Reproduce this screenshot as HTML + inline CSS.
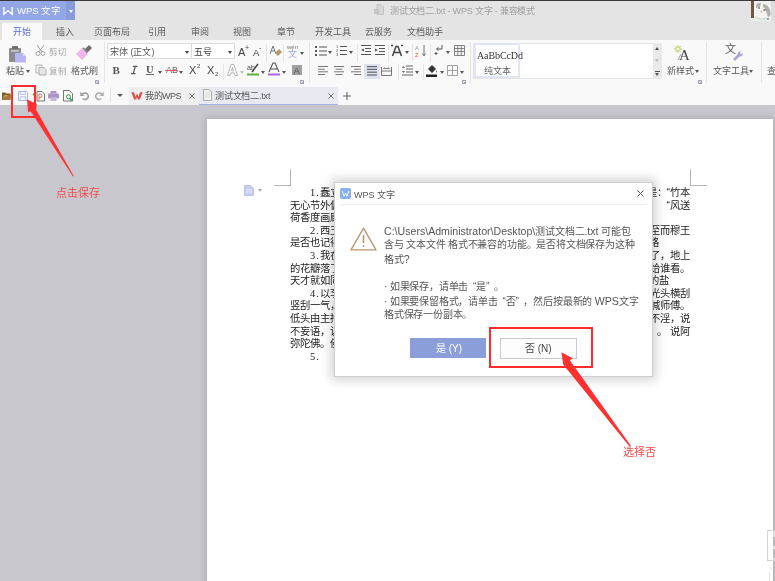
<!DOCTYPE html>
<html lang="zh-CN"><head><meta charset="utf-8">
<style>
*{margin:0;padding:0;box-sizing:border-box}
html,body{width:775px;height:581px;overflow:hidden;background:#c8c7cd}
body{position:relative;font-family:"Liberation Sans",sans-serif;color:#333}
#wrap{position:absolute;left:0;top:0;width:775px;height:581px;will-change:transform}
.a{position:absolute}
.t{position:absolute;white-space:nowrap;line-height:1}
svg{position:absolute;overflow:visible}
#topline{left:0;top:0;width:775px;height:1px;background:#3a3a3a}
#titlebar{left:0;top:1px;width:775px;height:39px;background:#e4e4e4}
#ribbon{left:0;top:40px;width:775px;height:46px;background:#f9f9f9}
#qat{left:0;top:86px;width:775px;height:19px;background:#f9f9f9}
#page{left:207px;top:119px;width:566px;height:470px;background:#fff;box-shadow:0 0 6px 1px rgba(60,55,70,0.22)}
.sep{position:absolute;width:1px;background:#e5e5e5}
.tab{position:absolute;top:27px;font-size:9px;color:#5a5a5a;line-height:10px}
.lbl{position:absolute;font-size:10px;color:#5a5a5a;line-height:10px;white-space:nowrap}
.dd{position:absolute;width:0;height:0;border-left:2.5px solid transparent;border-right:2.5px solid transparent;border-top:3px solid #555}
.ln{position:absolute;width:1px;background:#ccc}
.doc{position:absolute;font-size:10.3px;line-height:11px;color:#222;white-space:nowrap}
.num{font-family:"Liberation Serif",serif;font-size:10.5px;letter-spacing:1px}
.q{display:inline-block;width:10.3px;text-align:right}
.q2{display:inline-block;width:10.3px;text-align:left}
.dtx{font-size:10px;letter-spacing:-0.19px;line-height:14px;color:#555}
.dtx .L{font-size:10.6px;letter-spacing:0}
.dtx .q,.dtx .q2{width:8px}
</style></head><body><div id="wrap">
<div id="topline" class="a"></div>
<div id="titlebar" class="a"></div>
<div id="ribbon" class="a"></div>
<div id="qat" class="a"></div>

<!-- WPS button -->
<div class="a" style="left:0;top:1px;width:66px;height:19px;background:#93a6e6"></div>
<div class="a" style="left:66px;top:1px;width:9px;height:19px;background:#8a9bd9"></div>
<svg style="left:3px;top:7px" width="10" height="8" viewBox="0 0 10 8"><path d="M0.8 0 V7.2 L5 3.6 L9.2 7.2 V0" fill="none" stroke="#fff" stroke-width="1.4"/></svg>
<div class="t" style="left:17px;top:6px;font-size:9.5px;color:#fff">WPS 文字</div>
<div class="dd" style="left:68.5px;top:9.5px;border-top-color:#fff"></div>

<!-- title -->
<svg style="left:374px;top:4px" width="10" height="11" viewBox="0 0 10 11"><path d="M3 0.5h4l2.5 2.5v7.5h-6.5z" fill="#d6d6d6" stroke="#bbb" stroke-width="0.8"/><rect x="0" y="5" width="5" height="5" fill="#c4c4c4"/></svg>
<div class="t" style="left:390px;top:7px;font-size:9px;letter-spacing:-0.2px;color:#a0a0a0">测试文档二.txt - WPS 文字 - 兼容模式</div>

<!-- avatar -->
<svg style="left:751px;top:1px" width="24" height="21" viewBox="0 0 24 21">
<rect x="0" y="0" width="20" height="20" fill="#f0f1ee"/>
<rect x="0" y="0" width="3" height="17" fill="#6b5a44"/>
<ellipse cx="11" cy="11" rx="8" ry="8.5" fill="#f4f5f2"/>
<path d="M5 4q2-3 5-2l-1 4q-2 0-4 1z" fill="#b5b6b2"/>
<path d="M12 3q5 0 7 6t-2 7l-2-6q-1-3-3-4z" fill="#b0b1ad"/>
<ellipse cx="8" cy="7" rx="1.2" ry="0.7" fill="#666"/>
<ellipse cx="13.5" cy="9" rx="1.3" ry="0.7" fill="#555"/>
<ellipse cx="10.3" cy="10.8" rx="1" ry="0.7" fill="#d8a6a0"/>
<path d="M4 16q6 4 12 1" stroke="#d5e3cf" stroke-width="2" fill="none"/>
<circle cx="17" cy="18" r="1.1" fill="#6a9ac0"/>
<rect x="20" y="0" width="4" height="20" fill="#dcdcdc"/>
</svg>
<!-- tabs -->
<div class="a" style="left:2px;top:23px;width:40px;height:17px;background:#f9f9f9"></div>
<div class="tab" style="left:13px;color:#5b70c6">开始</div>
<div class="tab" style="left:56px">插入</div>
<div class="tab" style="left:94px">页面布局</div>
<div class="tab" style="left:148px">引用</div>
<div class="tab" style="left:191px">审阅</div>
<div class="tab" style="left:233px">视图</div>
<div class="tab" style="left:277px">章节</div>
<div class="tab" style="left:315px">开发工具</div>
<div class="tab" style="left:365px">云服务</div>
<div class="tab" style="left:407px">文档助手</div>

<!-- group1 clipboard -->
<svg style="left:8px;top:45px" width="20" height="18" viewBox="0 0 20 18"><rect x="1" y="3" width="12" height="14" rx="1" fill="#8c8c8c"/><rect x="4" y="1" width="6" height="3" rx="1" fill="#6f6f6f"/><rect x="3" y="5" width="8" height="2" fill="#bdbdbd"/><path d="M7 8h8l3 3v6.5H7z" fill="#b7b5ef"/><path d="M15 8v3h3z" fill="#dcdcf7"/></svg>
<div class="lbl" style="left:6px;top:66px;font-size:9px">粘贴</div>
<div class="dd" style="left:26px;top:70px"></div>
<svg style="left:35px;top:45px" width="11" height="11" viewBox="0 0 11 11"><path d="M2 0L7 7M9 0L4 7" stroke="#9a9a9a" stroke-width="1" fill="none"/><circle cx="3" cy="8.5" r="2" fill="none" stroke="#9a9a9a" stroke-width="0.9"/><circle cx="8" cy="8.5" r="2" fill="none" stroke="#9a9a9a" stroke-width="0.9"/></svg>
<div class="lbl" style="left:49px;top:47px;font-size:8.5px;color:#a8a8a8">剪切</div>
<svg style="left:35px;top:64px" width="12" height="12" viewBox="0 0 12 12"><path d="M1 1h6v8H1z" fill="#f6f6f6" stroke="#aaa" stroke-width="0.9"/><path d="M4 3.5h5l2 2V11H4z" fill="#e6e6e6" stroke="#aaa" stroke-width="0.9"/></svg>
<div class="lbl" style="left:49px;top:66px;font-size:8.5px;color:#a8a8a8">复制</div>
<svg style="left:75px;top:44px" width="18" height="18" viewBox="0 0 18 18"><path d="M1 10L7 4L13 10L7 16Z" fill="#f3b6ec"/><path d="M9 6L14 1L17 4L12 9Z" fill="#6d6d6d"/><path d="M7 4l2-0.5 3.5 3.5-0.5 2z" fill="#8a8a8a"/></svg>
<div class="lbl" style="left:71px;top:66px;font-size:9px">格式刷</div>
<svg style="left:95px;top:80px" width="4" height="4" viewBox="0 0 4 4"><path d="M0.5 0.5h3v3h-3z" fill="none" stroke="#8a88a0" stroke-width="0.8"/><path d="M1.5 1.5l2 2" stroke="#8a88a0" stroke-width="0.8"/></svg>
<div class="sep" style="left:104px;top:42px;height:41px"></div>

<!-- group2 font -->
<div class="a" style="left:107px;top:43px;width:85px;height:16px;background:#fff;border:1px solid #dcdcdc"></div>
<div class="lbl" style="left:110px;top:47px;font-size:9px;color:#555">宋体 (正文)</div>
<div class="dd" style="left:185px;top:51px;border-top-color:#444"></div>
<div class="a" style="left:191px;top:43px;width:44px;height:16px;background:#fff;border:1px solid #dcdcdc"></div>
<div class="lbl" style="left:194px;top:47px;font-size:9px;color:#444">五号</div>
<div class="dd" style="left:228px;top:51px;border-top-color:#444"></div>
<div class="t" style="left:238px;top:47px;font-size:11px;color:#444">A</div><div class="t" style="left:245px;top:44px;font-size:7px;color:#444">+</div>
<div class="t" style="left:253px;top:48px;font-size:9.5px;color:#444">A</div><div class="t" style="left:259px;top:44px;font-size:7px;color:#444">-</div>
<div class="sep" style="left:266px;top:44px;height:18px"></div>
<svg style="left:269px;top:45px" width="13" height="13" viewBox="0 0 13 13"><path d="M1 9L4 1L7 9M2.2 6h3.6" stroke="#666" stroke-width="0.9" fill="none"/><path d="M6 8l4-4 3 3-4 4z" fill="#b39a6c"/></svg>
<div class="sep" style="left:283px;top:44px;height:18px"></div>
<div class="t" style="left:287px;top:44px;font-size:6px;color:#777">wén</div>
<div class="t" style="left:288px;top:50px;font-size:9px;color:#9aa7e8">文</div>
<div class="dd" style="left:300px;top:52px"></div>
<!-- row2 -->
<div class="t" style="left:112.5px;top:65px;font-size:11px;font-weight:bold;font-family:'Liberation Serif',serif;color:#555">B</div>
<svg style="left:130px;top:65px" width="9" height="10" viewBox="0 0 9 10"><path d="M3 1.3h4.5M1 8.7h4.5M5.3 1.3L3.2 8.7" stroke="#555" stroke-width="1.2" fill="none"/></svg>
<div class="t" style="left:146px;top:65px;font-size:10.5px;font-weight:bold;font-family:'Liberation Serif',serif;color:#555">U</div><div class="a" style="left:146px;top:74px;width:8px;height:1px;background:#666"></div>
<div class="dd" style="left:158px;top:71px"></div>
<div class="t" style="left:166px;top:66px;font-size:9px;color:#666">AB</div>
<div class="a" style="left:165px;top:70px;width:13px;height:1px;background:#e05555"></div>
<div class="dd" style="left:179px;top:71px"></div>
<div class="t" style="left:189px;top:65px;font-size:11px;color:#444">X</div><div class="t" style="left:197px;top:63px;font-size:6px;color:#444">2</div>
<div class="t" style="left:207px;top:65px;font-size:11px;color:#444">X</div><div class="t" style="left:215px;top:71px;font-size:6px;color:#444">2</div>
<div class="sep" style="left:223px;top:64px;height:16px"></div>
<svg style="left:227px;top:64px" width="11" height="12" viewBox="0 0 11 12"><path d="M0.5 11.5L4 0.5h3l3.5 11h-2.5l-0.8-2.6h-3.4L3 11.5zM4.5 6.8h2L5.5 3.4z" fill="none" stroke="#aaa" stroke-width="0.8"/></svg>
<div class="dd" style="left:240px;top:71px;border-top-color:#bbb"></div>
<svg style="left:247px;top:62px" width="12" height="14" viewBox="0 0 12 14"><text x="0" y="8" font-size="7" fill="#444" font-family="Liberation Sans">ab</text><path d="M5 10L11 2" stroke="#444" stroke-width="1.5"/><rect x="0" y="11.5" width="12" height="2" fill="#5db53a"/></svg>
<div class="dd" style="left:261px;top:71px"></div>
<svg style="left:268px;top:62px" width="12" height="14" viewBox="0 0 12 14"><path d="M1 10L5 1h2l4 9M3 7h6" stroke="#555" stroke-width="1.1" fill="none"/><rect x="0" y="11.5" width="12" height="2" fill="#a56ae8"/></svg>
<div class="dd" style="left:282px;top:71px"></div>
<div class="a" style="left:292px;top:65px;width:10px;height:10px;background:#a0a0a0"></div>
<div class="t" style="left:293.5px;top:65.5px;font-size:9.5px;color:#555">A</div>
<svg style="left:300px;top:80px" width="4" height="4" viewBox="0 0 4 4"><path d="M0.5 0.5h3v3h-3z" fill="none" stroke="#8a88a0" stroke-width="0.8"/><path d="M1.5 1.5l2 2" stroke="#8a88a0" stroke-width="0.8"/></svg>
<div class="sep" style="left:309px;top:42px;height:41px"></div>

<!-- group3 paragraph -->
<svg style="left:315px;top:45px" width="12" height="11" viewBox="0 0 12 11"><g fill="#555"><rect x="0" y="1" width="2" height="2"/><rect x="0" y="5" width="2" height="2"/><rect x="0" y="9" width="2" height="2"/><rect x="4" y="1.5" width="8" height="1"/><rect x="4" y="5.5" width="8" height="1"/><rect x="4" y="9.5" width="8" height="1"/></g></svg>
<div class="dd" style="left:328px;top:51px"></div>
<svg style="left:336px;top:44px" width="11" height="13" viewBox="0 0 11 13"><g fill="#555"><text x="0" y="4" font-size="4" font-family="Liberation Sans">1</text><text x="0" y="8" font-size="4" font-family="Liberation Sans">2</text><text x="0" y="12" font-size="4" font-family="Liberation Sans">3</text><rect x="4" y="2" width="7" height="1"/><rect x="4" y="6" width="7" height="1"/><rect x="4" y="10" width="7" height="1"/></g></svg>
<div class="dd" style="left:349px;top:51px"></div>
<div class="sep" style="left:357px;top:44px;height:18px"></div>
<svg style="left:361px;top:45px" width="10" height="11" viewBox="0 0 10 11"><g fill="#555"><rect x="0" y="0" width="10" height="1"/><rect x="4" y="3" width="6" height="1"/><rect x="4" y="6" width="6" height="1"/><rect x="0" y="9" width="10" height="1"/><path d="M3 3.5L0 5l3 1.5z"/></g></svg>
<svg style="left:375px;top:45px" width="10" height="11" viewBox="0 0 10 11"><g fill="#555"><rect x="0" y="0" width="10" height="1"/><rect x="4" y="3" width="6" height="1"/><rect x="4" y="6" width="6" height="1"/><rect x="0" y="9" width="10" height="1"/><path d="M0 3.5L3 5l-3 1.5z"/></g></svg>
<div class="sep" style="left:388px;top:44px;height:18px"></div>
<svg style="left:391px;top:44px" width="12" height="13" viewBox="0 0 12 13"><path d="M1.5 12L5 2.5h2L10.5 12M3 8.5h6" stroke="#444" stroke-width="1.5" fill="none"/><g fill="#444"><rect x="0" y="1" width="2" height="1"/><rect x="0.5" y="0.5" width="1" height="2"/><rect x="10" y="1" width="2" height="1"/><rect x="10.5" y="0.5" width="1" height="2"/></g></svg>
<div class="dd" style="left:405px;top:51px"></div>
<div class="sep" style="left:412px;top:44px;height:18px"></div>
<svg style="left:415px;top:45px" width="12" height="12" viewBox="0 0 12 12"><text x="0" y="5" font-size="5.5" fill="#999" font-family="Liberation Sans">A</text><text x="0" y="11.5" font-size="5.5" fill="#e05b4b" font-family="Liberation Sans">Z</text><path d="M9 0v10M7.5 8.5L9 11l1.5-2.5" stroke="#666" stroke-width="0.9" fill="none"/></svg>
<div class="sep" style="left:430px;top:44px;height:18px"></div>
<svg style="left:434px;top:45px" width="9" height="10" viewBox="0 0 9 10"><path d="M8 0v4H3M4.5 2.5L2.5 4l2 1.5M2 7v3M0.5 8.5h3" stroke="#555" stroke-width="1" fill="none"/></svg>
<div class="dd" style="left:446px;top:51px"></div>
<svg style="left:454px;top:45px" width="11" height="11" viewBox="0 0 11 11"><path d="M0.5 0.5h10v10h-10zM0.5 3.5h10M0.5 6.5h10M3.8 0.5v10M7.2 0.5v10" stroke="#777" stroke-width="0.9" fill="none"/></svg>
<!-- row2 -->
<svg style="left:318px;top:66px" width="10" height="9" viewBox="0 0 10 9"><g fill="#777"><rect x="0" y="0" width="10" height="1"/><rect x="0" y="2.7" width="7" height="1"/><rect x="0" y="5.3" width="10" height="1"/><rect x="0" y="8" width="7" height="1"/></g></svg>
<svg style="left:334px;top:66px" width="10" height="9" viewBox="0 0 10 9"><g fill="#777"><rect x="0" y="0" width="10" height="1"/><rect x="1.5" y="2.7" width="7" height="1"/><rect x="0" y="5.3" width="10" height="1"/><rect x="1.5" y="8" width="7" height="1"/></g></svg>
<svg style="left:351px;top:66px" width="10" height="9" viewBox="0 0 10 9"><g fill="#777"><rect x="0" y="0" width="10" height="1"/><rect x="3" y="2.7" width="7" height="1"/><rect x="0" y="5.3" width="10" height="1"/><rect x="3" y="8" width="7" height="1"/></g></svg>
<div class="a" style="left:364px;top:64px;width:16px;height:15px;background:#dde2f1"></div>
<svg style="left:367px;top:66px" width="10" height="10" viewBox="0 0 10 10"><g fill="#666"><rect x="0" y="0" width="10" height="1.2"/><rect x="0" y="2.8" width="10" height="1.2"/><rect x="0" y="5.6" width="10" height="1.2"/><rect x="0" y="8.4" width="10" height="1.2"/></g></svg>
<svg style="left:381px;top:66px" width="11" height="10" viewBox="0 0 11 10"><path d="M0.5 1v8.5h10V1M0.5 5h10" stroke="#666" stroke-width="0.9" fill="none"/><path d="M2.5 2.5h6M2.5 2.5l1.2-1M8.5 2.5l-1.2-1" stroke="#666" stroke-width="0.8" fill="none"/></svg>
<div class="sep" style="left:398px;top:64px;height:16px"></div>
<svg style="left:402px;top:65px" width="11" height="12" viewBox="0 0 11 12"><g fill="#666"><rect x="4" y="0.5" width="7" height="1"/><rect x="4" y="3.5" width="7" height="1"/><rect x="4" y="6.5" width="7" height="1"/><rect x="0" y="9.5" width="11" height="1"/><path d="M0 3h3L1.5 1zM0 6h3L1.5 8z"/></g></svg>
<div class="dd" style="left:415px;top:71px"></div>
<div class="sep" style="left:423px;top:64px;height:16px"></div>
<svg style="left:426px;top:63px" width="12" height="14" viewBox="0 0 12 14"><path d="M2 6L6 2l4 4-4 4z" fill="#333"/><path d="M10 7q1.5 2 0 3" fill="#333"/><rect x="0" y="11.5" width="11" height="2.5" fill="#222"/></svg>
<div class="dd" style="left:440px;top:71px"></div>
<svg style="left:447px;top:65px" width="11" height="11" viewBox="0 0 11 11"><path d="M0.5 0.5h10v10h-10zM0.5 5.5h10M5.5 0.5v10" stroke="#999" stroke-width="0.9" fill="none"/></svg>
<div class="dd" style="left:460px;top:71px"></div>
<svg style="left:462px;top:80px" width="4" height="4" viewBox="0 0 4 4"><path d="M0.5 0.5h3v3h-3z" fill="none" stroke="#8a88a0" stroke-width="0.8"/><path d="M1.5 1.5l2 2" stroke="#8a88a0" stroke-width="0.8"/></svg>
<div class="sep" style="left:470px;top:42px;height:41px"></div>

<!-- group4 styles -->
<div class="a" style="left:473px;top:43px;width:189px;height:36px;background:#fff;border:1px solid #e4e4e4"></div>
<div class="a" style="left:474px;top:43px;width:46px;height:35px;border:2px solid #e1e5f7;background:#fff"></div>
<div class="t" style="left:477px;top:51px;font-size:10px;font-family:'Liberation Serif',serif;color:#333;letter-spacing:-0.1px">AaBbCcDd</div>
<div class="lbl" style="left:484px;top:66px;font-size:9px;color:#666">纯文本</div>
<div class="a" style="left:653px;top:43px;width:9px;height:36px;background:#e9e9e9"></div>
<div class="dd" style="left:655px;top:47px;border-top:none;border-bottom:3px solid #555"></div>
<div class="dd" style="left:655px;top:59px;border-top-color:#bbb"></div>
<div class="a" style="left:655px;top:71px;width:5px;height:1px;background:#555"></div>
<div class="dd" style="left:655px;top:73px"></div>
<svg style="left:674px;top:45px" width="18" height="16" viewBox="0 0 18 16"><circle cx="4" cy="4" r="2.2" fill="none" stroke="#b6c94a" stroke-width="1"/><g stroke="#b6c94a" stroke-width="0.8"><path d="M4 0v1.5M4 6.5v1.5M0 4h1.5M6.5 4h1.5M1.2 1.2l1 1M5.8 5.8l1 1M6.8 1.2l-1 1M2.2 5.8l-1 1"/></g><text x="5" y="15" font-size="15" font-family="Liberation Serif" fill="#444">A</text><path d="M4 15l3-6" stroke="#888" stroke-width="0.8"/></svg>
<div class="lbl" style="left:667px;top:66px;font-size:9px">新样式</div>
<div class="dd" style="left:695px;top:70px"></div>
<svg style="left:698px;top:80px" width="4" height="4" viewBox="0 0 4 4"><path d="M0.5 0.5h3v3h-3z" fill="none" stroke="#8a88a0" stroke-width="0.8"/><path d="M1.5 1.5l2 2" stroke="#8a88a0" stroke-width="0.8"/></svg>
<div class="sep" style="left:706px;top:42px;height:41px"></div>
<div class="t" style="left:725px;top:44px;font-size:11px;color:#555">文</div>
<svg style="left:733px;top:51px" width="10" height="10" viewBox="0 0 10 10"><path d="M1 9L6 4" stroke="#a9a6d6" stroke-width="2.6"/><circle cx="7" cy="3" r="2.5" fill="#a9a6d6"/><circle cx="8" cy="2" r="1" fill="#f9f9f9"/></svg>
<div class="lbl" style="left:713px;top:66px;font-size:9px">文字工具</div>
<div class="dd" style="left:749px;top:70px"></div>
<div class="sep" style="left:761px;top:42px;height:41px"></div>
<div class="lbl" style="left:767px;top:66px;font-size:9px">查</div>

<!--RIBBON-->

<!-- QAT -->
<svg style="left:2px;top:92px" width="9" height="8" viewBox="0 0 9 8"><path d="M0 0.5h3.2l1 1h4.3v6.5H0z" fill="#7d5f22"/><path d="M1.3 3.2h7.7l-1.2 4.8H0z" fill="#a07a36"/><path d="M2.2 4.3q1-0.8 3-0.6" stroke="#e9d7b0" stroke-width="0.8" fill="none"/></svg>
<svg style="left:18px;top:91px" width="10" height="10" viewBox="0 0 10 10"><path d="M0.5 0.5h8l1 1v8h-9z" fill="#fbfbff" stroke="#aab5ee" stroke-width="1"/><path d="M2.3 0.5v3h5v-3M2.3 9.5v-3.7h5.4v3.7" fill="none" stroke="#aab5ee" stroke-width="0.9"/></svg>
<svg style="left:32px;top:91px" width="13" height="11" viewBox="0 0 13 11"><path d="M5 0.5h5l2.5 2.5v7h-7.5z" fill="#fafafa" stroke="#555" stroke-width="0.8"/><path d="M7 9.5v-6.5q3-0.8 3 1.7t-3 1.8" fill="none" stroke="#d07a6c" stroke-width="1"/><circle cx="1.6" cy="3.5" r="0.9" fill="#3a9a3a"/></svg>
<svg style="left:48px;top:91px" width="11" height="10" viewBox="0 0 11 10"><rect x="2.5" y="0" width="6" height="2.5" fill="#a995c8"/><rect x="0" y="2.5" width="11" height="5" rx="1.2" fill="#a995c8"/><rect x="2.5" y="6" width="6" height="4" fill="#c3b4dc"/></svg>
<svg style="left:63px;top:90px" width="11" height="12" viewBox="0 0 11 12"><path d="M0.5 0.5h6l3 3v7.5h-9z" fill="#fafafa" stroke="#555" stroke-width="0.8"/><circle cx="5.5" cy="6.8" r="2" fill="none" stroke="#2f9a4a" stroke-width="1"/><path d="M6.8 8.3L9.5 11" stroke="#2f9a4a" stroke-width="1.3"/></svg>
<svg style="left:80px;top:91px" width="9" height="9" viewBox="0 0 9 9"><path d="M2.5 7.5c2.8 2.2 6.5 0.2 5.6-3.2-0.8-2.6-3.8-3-5.8-1.3" fill="none" stroke="#9c9c9c" stroke-width="1.5"/><path d="M0.3 0.8v4.2h4.2z" fill="#9c9c9c"/></svg>
<svg style="left:95px;top:91px" width="9" height="9" viewBox="0 0 9 9"><path d="M6.5 7.5c-2.8 2.2-6.5 0.2-5.6-3.2 0.8-2.6 3.8-3 5.8-1.3" fill="none" stroke="#ababab" stroke-width="1.5"/><path d="M8.7 0.8v4.2h-4.2z" fill="#ababab"/></svg>
<div class="sep" style="left:110px;top:88px;height:14px;background:#e2e2e2"></div>
<div class="dd" style="left:117px;top:94px;border-left-width:3px;border-right-width:3px;border-top:3.5px solid #555"></div>
<!-- doc tabs -->
<div class="a" style="left:129px;top:87px;width:70px;height:18px;background:#efefef"></div>
<svg style="left:131px;top:91px" width="12" height="9" viewBox="0 0 12 9"><path d="M0.3 1.2h2.6l1.6 4.6 1.5-3.4 1.5 3.4 1.6-4.6h2.6l-2.8 7.3h-2l-0.9-2.3-0.9 2.3h-2z" fill="#e0514a"/></svg>
<div class="lbl" style="left:145px;top:91px;font-size:9px;letter-spacing:-0.5px;color:#555">我的WPS</div>
<svg style="left:189px;top:93px" width="6" height="6" viewBox="0 0 6 6"><path d="M0.3 0.3L5.7 5.7M5.7 0.3L0.3 5.7" stroke="#666" stroke-width="0.9"/></svg>
<div class="a" style="left:199px;top:87px;width:139px;height:18px;background:#e8eaf2"></div>
<div class="a" style="left:199px;top:104px;width:139px;height:1px;background:#a3b1e4"></div>
<svg style="left:203px;top:89px" width="9" height="12" viewBox="0 0 9 12"><path d="M0.5 0.5h5.5l2.5 2.5v8.5h-8z" fill="#f2f2f2" stroke="#999" stroke-width="0.8"/><path d="M2 4h5M2 6h5M2 8h5" stroke="#ccc" stroke-width="0.6"/></svg>
<div class="lbl" style="left:215px;top:91px;font-size:9px;letter-spacing:-0.2px;color:#555">测试文档二.txt</div>
<svg style="left:328px;top:93px" width="6" height="6" viewBox="0 0 6 6"><path d="M0.3 0.3L5.7 5.7M5.7 0.3L0.3 5.7" stroke="#666" stroke-width="0.9"/></svg>
<svg style="left:343px;top:92px" width="8" height="8" viewBox="0 0 8 8"><path d="M4 0v8M0 4h8" stroke="#666" stroke-width="1.1"/></svg>

<!--QAT-->

<div id="page" class="a"></div>

<!-- corner marks -->
<div class="a" style="left:290px;top:169px;width:1px;height:17px;background:#b5b5b5"></div>
<div class="a" style="left:274px;top:185px;width:17px;height:1px;background:#b5b5b5"></div>
<div class="a" style="left:690px;top:169px;width:1px;height:17px;background:#b5b5b5"></div>
<div class="a" style="left:690px;top:185px;width:17px;height:1px;background:#b5b5b5"></div>
<svg style="left:244px;top:185px" width="10" height="11" viewBox="0 0 10 11"><path d="M0.5 0.5h6l3 3v7h-9z" fill="#c5cdf0" stroke="#b3bdea" stroke-width="0.8"/><path d="M2 5h6M2 7h6" stroke="#eef" stroke-width="0.8"/></svg>
<div class="dd" style="left:258px;top:189px;border-top-color:#aaa"></div>
<!-- doc text left -->
<div class="doc" style="left:290px;top:187px">　　<span class="num">1.</span>蠢立</div>
<div class="doc" style="left:290px;top:200px">无心节外偏</div>
<div class="doc" style="left:290px;top:212px">荷香度画廊</div>
<div class="doc" style="left:290px;top:225px">　　<span class="num">2.</span>西王</div>
<div class="doc" style="left:290px;top:237px">是否也记得</div>
<div class="doc" style="left:290px;top:250px">　　<span class="num">3.</span>我在</div>
<div class="doc" style="left:290px;top:263px">的花瓣落了</div>
<div class="doc" style="left:290px;top:275px">天才就如同</div>
<div class="doc" style="left:290px;top:288px">　　<span class="num">4.</span>以李</div>
<div class="doc" style="left:290px;top:300px">竖刮一气，</div>
<div class="doc" style="left:290px;top:313px">低头由主持</div>
<div class="doc" style="left:290px;top:326px">不妄语，说</div>
<div class="doc" style="left:290px;top:338px">弥陀佛。佛</div>
<div class="doc" style="left:290px;top:351px">　　<span class="num">5.</span></div>
<!-- doc text right -->
<div class="doc" style="right:85px;top:187px;text-align:right">是：“竹本</div>
<div class="doc" style="right:85px;top:200px;text-align:right">“风送</div>
<div class="doc" style="right:85px;top:225px;text-align:right">至而穆王</div>
<div class="doc" style="left:649px;top:237px">路</div>
<div class="doc" style="right:85px;top:250px;text-align:right">了，地上</div>
<div class="doc" style="right:85px;top:263px;text-align:right">给谁看。</div>
<div class="doc" style="left:649px;top:275px">的盐</div>
<div class="doc" style="right:85px;top:288px;text-align:right">光头横刮</div>
<div class="doc" style="right:85px;top:300px;text-align:right">，喊师傅。</div>
<div class="doc" style="right:85px;top:313px;text-align:right">不淫，说</div>
<div class="doc" style="right:85px;top:326px;text-align:right">。 说阿</div>
<!-- right small box -->
<div class="a" style="left:767px;top:530px;width:10px;height:31px;border:1px solid #d4d4d4;background:rgba(255,255,255,0.55)"></div>
<div class="a" style="left:773px;top:537px;width:2px;height:9px;background:#b9b8be"></div><div class="a" style="left:773px;top:549px;width:2px;height:9px;background:#b9b8be"></div>
<div class="a" style="left:769px;top:567px;width:3px;height:3px;border:1px solid #e6e6e6;border-radius:2px"></div><div class="a" style="left:769px;top:572px;width:1px;height:9px;background:#e6e6e6"></div>

<!--DOC-->

<!-- dialog -->
<div class="a" style="left:334px;top:182px;width:319px;height:195px;background:#fff;border:1px solid #cfcfcf;box-shadow:0 0 10px 3px rgba(0,0,0,0.18)"></div>
<svg style="left:340px;top:188px" width="11" height="11" viewBox="0 0 11 11"><rect x="0" y="0" width="11" height="11" rx="2" fill="#86aef6"/><path d="M2.2 3L4 8.3L5.5 5.2L7 8.3L8.8 3" fill="none" stroke="#fff" stroke-width="1"/></svg>
<div class="lbl" style="left:354px;top:189.5px;font-size:9px;color:#555">WPS 文字</div>
<svg style="left:637px;top:190px" width="7" height="7" viewBox="0 0 7 7"><path d="M0.5 0.5L6.5 6.5M6.5 0.5L0.5 6.5" stroke="#555" stroke-width="1"/></svg>
<div class="a" style="left:340px;top:204px;width:306px;height:1px;background:#ececec"></div>
<svg style="left:350px;top:227px" width="27" height="24" viewBox="0 0 27 24"><path d="M13.5 1.2L26 22.8H1z" fill="none" stroke="#b8946c" stroke-width="1.3" stroke-linejoin="round"/><path d="M13.5 8v8" stroke="#b8946c" stroke-width="1.6"/><circle cx="13.5" cy="19.2" r="0.9" fill="#b8946c"/></svg>
<div class="lbl dtx" style="left:384px;top:224px"><span class="L">C:\Users\Administrator\Desktop\</span>测试文档二<span class="L">.txt </span>可能包</div>
<div class="lbl dtx" style="left:384px;top:238px">含与 文本文件 格式不兼容的功能。是否将文档保存为这种</div>
<div class="lbl dtx" style="left:384px;top:252px">格式<span class="L">?</span></div>
<div class="lbl dtx" style="left:384px;top:280px">· 如果保存，请单击<span class="q">“</span>是<span class="q2">”</span>。</div>
<div class="lbl dtx" style="left:384px;top:294px">· 如果要保留格式，请单击<span class="q">“</span>否<span class="q2">”</span>，然后按最新的 <span class="L">WPS</span>文字</div>
<div class="lbl dtx" style="left:384px;top:308px">格式保存一份副本。</div>
<div class="a" style="left:410px;top:338px;width:76px;height:20px;background:#8b9ed9"></div>
<div class="lbl" style="left:436px;top:344px;font-size:10px;color:#fff">是 (Y)</div>
<div class="a" style="left:500px;top:338px;width:77px;height:21px;background:#fdfdfd;border:1px solid #c9c9c9"></div>
<div class="lbl" style="left:525px;top:344px;font-size:10px;color:#444">否 (N)</div>

<!--DIALOG-->

<!-- annotations -->
<div class="a" style="left:11px;top:85px;width:25px;height:33px;border:2px solid #ff2d2d"></div>
<svg style="left:0;top:0" width="775" height="581" viewBox="0 0 775 581"><path d="M27 99.4L36.9 104L36 109.5L73.8 176.2L72.8 176.2L30.6 111.2L28.1 112.4Z" fill="#ff3030"/></svg>
<div class="lbl" style="left:56px;top:188px;font-size:11px;color:#f24c4c">点击保存</div>
<div class="a" style="left:489px;top:327px;width:104px;height:41px;border:2px solid #ff2b2b"></div>
<svg style="left:0;top:0" width="775" height="581" viewBox="0 0 775 581"><path d="M561.5 352.3L572.5 358.3L570 360.5L631 446L629.5 446.5L563.2 364.6Z" fill="#ff3030"/></svg>
<div class="lbl" style="left:623px;top:447px;font-size:11px;color:#f24c4c">选择否</div>

<!--ANNOT-->
</div></body></html>
